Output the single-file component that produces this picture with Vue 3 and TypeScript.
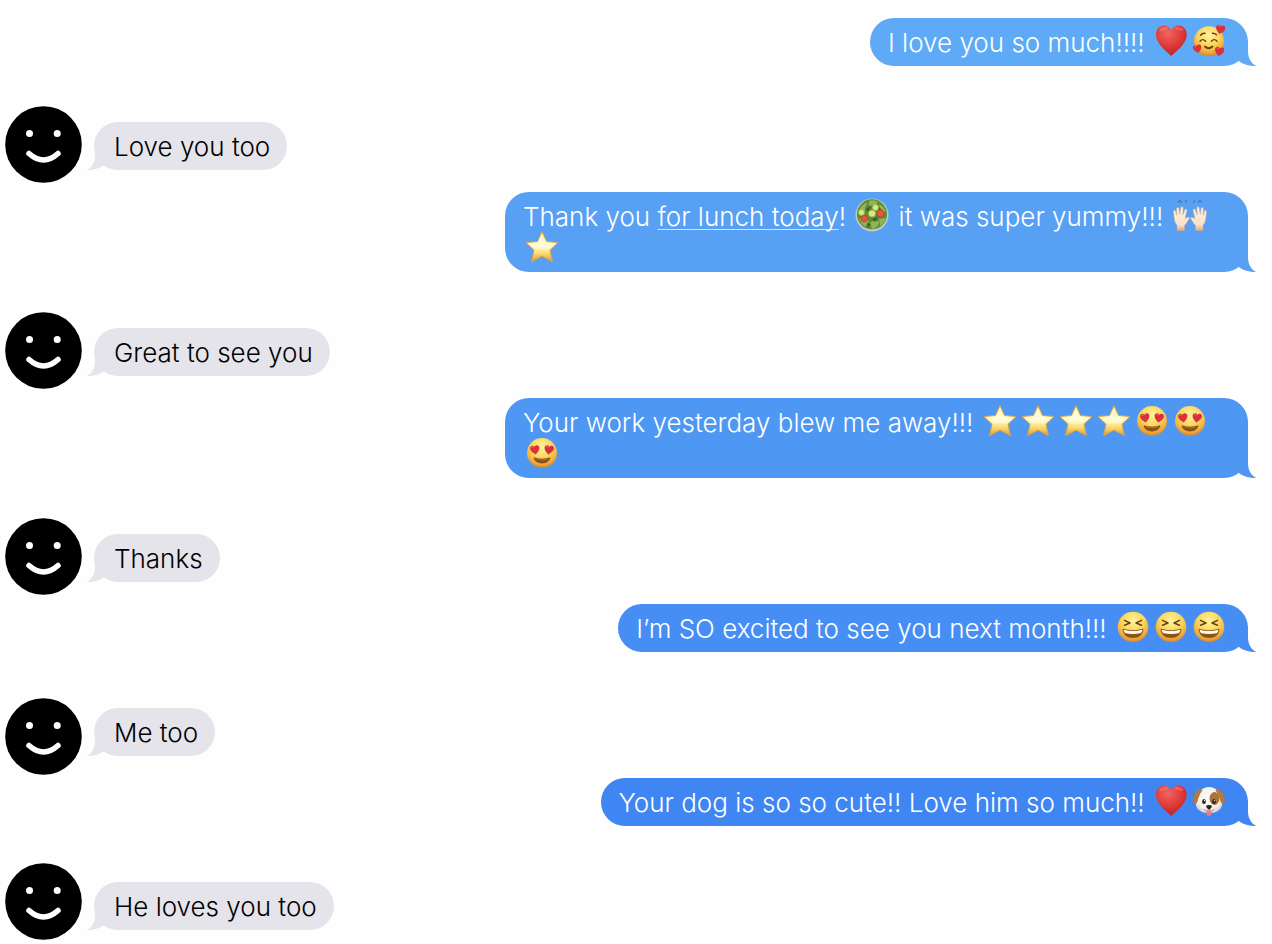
<script setup lang="ts">
interface Part {
  text?: string
  link?: string
  emoji?: string
}

interface Message {
  from: 'me' | 'friend'
  tone: string
  parts: Part[]
}

const labels: Record<string, string> = {
  heart: 'Red heart',
  adore: 'Smiling face with hearts',
  salad: 'Green salad',
  hands: 'Raising hands',
  star: 'Star',
  eyes: 'Heart eyes',
  laugh: 'Squinting laugh',
  dog: 'Dog face',
}

const emojis = (...names: string[]): Part[] => names.map((emoji) => ({ emoji }))

const messages: Message[] = [
  { from: 'me', tone: 'blue-1', parts: [{ text: 'I love you so much!!!! ' }, ...emojis('heart', 'adore')] },
  { from: 'friend', tone: 'regular', parts: [{ text: 'Love you too' }] },
  {
    from: 'me',
    tone: 'blue-2',
    parts: [
      { text: 'Thank you ' },
      { link: 'for lunch today' },
      { text: '! ' },
      ...emojis('salad'),
      { text: ' it was super yummy!!! ' },
      ...emojis('hands', 'star'),
    ],
  },
  { from: 'friend', tone: 'regular', parts: [{ text: 'Great to see you' }] },
  {
    from: 'me',
    tone: 'blue-3',
    parts: [
      { text: 'Your work yesterday blew me away!!! ' },
      ...emojis('star', 'star', 'star', 'star', 'eyes', 'eyes', 'eyes'),
    ],
  },
  { from: 'friend', tone: 'regular', parts: [{ text: 'Thanks' }] },
  {
    from: 'me',
    tone: 'blue-4',
    parts: [{ text: 'I’m SO excited to see you next month!!! ' }, ...emojis('laugh', 'laugh', 'laugh')],
  },
  { from: 'friend', tone: 'low', parts: [{ text: 'Me too' }] },
  {
    from: 'me',
    tone: 'blue-5',
    parts: [{ text: 'Your dog is so so cute!! Love him so much!! ' }, ...emojis('heart', 'dog')],
  },
  { from: 'friend', tone: 'high', parts: [{ text: 'He loves you too' }] },
]
</script>

<template>
  <main class="chat">
    <svg class="sprite" width="0" height="0" aria-hidden="true">
      <defs>
        <radialGradient id="g-heart" cx="0.4" cy="0.25" r="0.85">
          <stop offset="0" stop-color="#f0665f" />
          <stop offset="0.5" stop-color="#e03a3a" />
          <stop offset="1" stop-color="#b01d22" />
        </radialGradient>
        <radialGradient id="g-face" cx="0.5" cy="0.3" r="0.72">
          <stop offset="0" stop-color="#fff3a0" />
          <stop offset="0.5" stop-color="#fad55a" />
          <stop offset="0.8" stop-color="#efa93a" />
          <stop offset="1" stop-color="#cc7f2a" />
        </radialGradient>
        <linearGradient id="g-star" x1="0" y1="0" x2="0" y2="1">
          <stop offset="0" stop-color="#ffefa8" />
          <stop offset="0.45" stop-color="#fffbd0" />
          <stop offset="0.7" stop-color="#fbe07a" />
          <stop offset="1" stop-color="#e09c2b" />
        </linearGradient>
        <linearGradient id="g-skin" x1="0" y1="0" x2="0" y2="1">
          <stop offset="0" stop-color="#fff0e2" />
          <stop offset="0.75" stop-color="#fbe0cb" />
          <stop offset="1" stop-color="#d3a685" />
        </linearGradient>
        <radialGradient id="g-fur" cx="0.5" cy="0.4" r="0.65">
          <stop offset="0" stop-color="#ffffff" />
          <stop offset="0.7" stop-color="#f3efea" />
          <stop offset="1" stop-color="#cfc6bc" />
        </radialGradient>
      </defs>

      <symbol id="e-heart" viewBox="0 0 34 34">
        <path fill="url(#g-heart)" d="M17.300 32C14 28.600 2 20.500 2 10.500C2 5 5.700 1.500 10 1.500C13.300 1.500 16 3.400 17.300 6.200C18.600 3.400 21.300 1.500 24.700 1.500C29 1.500 32.700 5 32.700 10.500C32.700 20.500 20.600 28.600 17.300 32Z" />
        <ellipse cx="9.500" cy="5" rx="4.500" ry="1.700" fill="#ffb1a6" opacity="0.3" transform="rotate(-20 9.500 5)" />
        <ellipse cx="25" cy="4.700" rx="4.500" ry="1.600" fill="#ffb1a6" opacity="0.3" transform="rotate(15 25 4.700)" />
      </symbol>

      <symbol id="e-mini" viewBox="0 0 10 10">
        <path fill="#d9303a" d="M5 9.600C3 7.800 0.300 6 0.300 3.200C0.300 1.500 1.500 0.500 2.800 0.500C3.800 0.500 4.600 1.100 5 1.900C5.400 1.100 6.200 0.500 7.200 0.500C8.500 0.500 9.700 1.500 9.700 3.200C9.700 6 7 7.800 5 9.600Z" />
        <ellipse cx="2.900" cy="2" rx="1.300" ry="0.700" fill="#ff9a92" opacity="0.45" />
      </symbol>

      <symbol id="e-adore" viewBox="0 0 34 34">
        <circle cx="17" cy="17.200" r="15" fill="url(#g-face)" />
        <g fill="none" stroke="#6b3d10" stroke-width="1.400" stroke-linecap="round">
          <path d="M8.500 11.300Q10 9 13 9.200" />
          <path d="M20.500 9.200Q22.500 9 24.500 10.700" />
          <path d="M8 17.300Q10.800 14 13.600 17.300" />
          <path d="M19.400 17.300Q22.200 14 25 17.300" />
          <path d="M13 22.500Q16.500 26 20.500 22.500" stroke-width="1.800" />
        </g>
        <use href="#e-mini" x="23.500" y="0.500" width="10" height="10" transform="rotate(12 28 5)" />
        <use href="#e-mini" x="1" y="20" width="9" height="10" transform="rotate(-12 5 25)" />
        <use href="#e-mini" x="22.500" y="22.500" width="10" height="10" transform="rotate(10 27 27)" />
      </symbol>

      <symbol id="e-star" viewBox="0 0 34 34">
        <path fill="url(#g-star)" stroke="#dba246" stroke-width="1" stroke-linejoin="round" d="M17 1.500L21.500 11.500L33 12.500L25 20.300L27.500 31.800L17 26.200L6.500 31.800L9 20.300L1 12.500L12.500 11.500Z" />
        <path fill="#fffde4" opacity="0.5" d="M17 4.500L20.500 12.800L29.500 13.700L22 19.500H12L4.500 13.700L13.500 12.800Z" />
      </symbol>

      <symbol id="e-eyes" viewBox="0 0 34 34">
        <circle cx="17" cy="17" r="15" fill="url(#g-face)" />
        <use href="#e-mini" x="4.500" y="9" width="11" height="10" transform="rotate(-8 10 14)" />
        <use href="#e-mini" x="18.500" y="9" width="11" height="10" transform="rotate(8 24 14)" />
        <path d="M8.500 21.300Q17 24.200 25.500 21.300C24.800 25.300 21.500 27.500 17 27.500C12.500 27.500 9.200 25.300 8.500 21.300Z" fill="#87501a" />
        <path d="M10.200 22.900Q17 25.200 23.800 22.900" fill="none" stroke="#b8792c" stroke-width="0.800" />
      </symbol>

      <symbol id="e-laugh" viewBox="0 0 34 34">
        <circle cx="17" cy="17" r="15.300" fill="url(#g-face)" />
        <g fill="none" stroke="#6b4212" stroke-width="1.500" stroke-linecap="round" stroke-linejoin="round">
          <path d="M8.500 10.300L14 13L8.500 15.300" />
          <path d="M25.500 10.300L20 13L25.500 15.300" />
        </g>
        <path d="M6.500 18.800Q17 21.500 27.500 18.800C27 25 23 28 17 28C11 28 7 25 6.500 18.800Z" fill="#8a5416" />
        <path d="M7.500 19.800Q17 22.300 26.500 19.800Q26 22.600 24.600 23.300Q17 24.600 9.400 23.300Q8 22.600 7.500 19.800Z" fill="#fffbea" />
      </symbol>

      <symbol id="e-salad" viewBox="0 0 34 34">
        <circle cx="17" cy="17" r="16.500" fill="#b9cdc4" />
        <circle cx="17" cy="16.300" r="15" fill="#5f8a37" />
        <g fill="#8fb651">
          <path d="M3.500 13Q7 5 13 5Q9 9 10 13Z" />
          <path d="M14 3Q20 1 23 4.500Q19 9 14 7Z" />
          <path d="M24 6Q30 9 30.500 14L25 12Z" />
          <path d="M4 21Q10 19 14 23L10 29Q6 26 4 21Z" />
          <path d="M15 25Q20 21 24 24Q23 30 17 31Z" />
          <path d="M24 21L31 20Q29 26 25 28Z" />
        </g>
        <g fill="#35601f">
          <path d="M11 11L16 8L13 14Z" />
          <path d="M17 21L23 19L20 24Z" />
          <path d="M12 25L16 26L13 29Z" />
          <path d="M24 9L27 12L24 12Z" />
        </g>
        <g fill="#d9e87f" stroke="#93b84a" stroke-width="0.800">
          <circle cx="6.500" cy="14.500" r="3" />
          <circle cx="17" cy="15.500" r="3.500" />
          <circle cx="20.500" cy="9.500" r="3" />
        </g>
        <g fill="#e9543a" stroke="#c23a28" stroke-width="0.700">
          <circle cx="9.300" cy="20.800" r="3.300" />
          <circle cx="25.500" cy="15.500" r="3.500" />
        </g>
      </symbol>

      <symbol id="e-palm" viewBox="0 0 17 34">
        <path fill="url(#g-skin)" stroke="#d9ad8b" stroke-width="0.500" stroke-linejoin="round" d="M4 32.500L4 27C2 24.500 1.400 21.500 1 17.500L0.500 11.500C0.400 10 2.300 9.800 2.600 11.300L3.600 16L3.700 8.400C3.700 6.800 5.900 6.800 6 8.400L6.700 15L7.900 7.500C8.200 6 10.300 6.300 10.200 7.900L9.800 15.500L11.800 9.700C12.300 8.300 14.200 8.900 13.900 10.400L12.100 19.500L14.300 18.300C15.600 17.500 17 18.500 16.200 19.700C14.500 22.200 13.500 25.500 11.500 27L11.500 32.500Q7.500 34 4 32.500Z" />
      </symbol>

      <symbol id="e-hands" viewBox="0 0 34 34">
        <use href="#e-palm" width="17" height="34" transform="translate(0 3) scale(1 0.900)" />
        <use href="#e-palm" width="17" height="34" transform="translate(34 3) scale(-1 0.900)" />
        <g fill="none" stroke="#5a7488" stroke-width="1.200" stroke-linecap="round" opacity="0.850">
          <path d="M5.500 4.300L7 2.300L8.500 4.300" />
          <path d="M12 2L13.500 4.300" />
          <path d="M20.500 4.300L22 2" />
          <path d="M25.500 4.300L27 2.300L28.500 4.300" />
        </g>
      </symbol>

      <symbol id="e-dog" viewBox="0 0 34 34">
        <path fill="url(#g-fur)" d="M17 3C24 3 28 8 28.500 14C30 17 31 20 29.500 23C27 28 22 29 17 29C12 29 7 28 4.500 23C3 20 4 17 5.500 14C6 8 10 3 17 3Z" />
        <path fill="#b27a3e" d="M8.500 5C4 5.500 1 11 1.200 17C1.300 20.500 4 21 5.500 17.500C6.500 13 8 9.500 10.500 6.500Z" />
        <path fill="#b27a3e" d="M25.500 5C30 5.500 33 11 32.800 17C32.700 20.500 30 21 28.500 17.500C27.500 13 26 9.500 23.500 6.500Z" />
        <ellipse cx="22.500" cy="14.500" rx="5" ry="6.500" fill="#a8743b" />
        <ellipse cx="12" cy="17.500" rx="1.900" ry="2.500" fill="#33251d" />
        <ellipse cx="22" cy="17.500" rx="1.900" ry="2.500" fill="#33251d" />
        <circle cx="12.500" cy="16.700" r="0.600" fill="#ffffff" />
        <circle cx="22.500" cy="16.700" r="0.600" fill="#ffffff" />
        <path fill="#f0788a" d="M14.500 26.500H19.500V29.500C19.500 32.500 14.500 32.500 14.500 29.500Z" />
        <path d="M12 25.500Q14.500 28 17 25.500Q19.500 28 22 25.500" fill="none" stroke="#a39388" stroke-width="0.900" stroke-linecap="round" />
        <path fill="#2a2020" d="M14 21.800Q17 20.300 20 21.800Q19.800 24.500 17 25.800Q14.200 24.500 14 21.800Z" />
      </symbol>
    </svg>

    <div v-for="(message, i) in messages" :key="i" class="row" :class="[message.from, message.tone]">
      <svg v-if="message.from === 'friend'" class="avatar" viewBox="0 0 77 77" role="img" aria-label="Friend">
        <circle cx="38.500" cy="38.500" r="38.300" fill="#000" />
        <circle cx="24.500" cy="27.500" r="3.500" fill="#fff" />
        <circle cx="52.200" cy="27.500" r="3.500" fill="#fff" />
        <path d="M24 47.500Q38.500 60.500 53 47.500" fill="none" stroke="#fff" stroke-width="5.500" stroke-linecap="round" />
      </svg>
      <div class="bubble">
        <template v-for="(part, j) in message.parts" :key="j"><svg v-if="part.emoji" class="emoji" role="img" :aria-label="labels[part.emoji]"><use :href="'#e-' + part.emoji" /></svg><a v-else-if="part.link" class="link" href="#">{{ part.link }}</a><span v-else>{{ part.text }}</span></template>
        <svg class="tail" viewBox="0 0 34 26" aria-hidden="true">
          <path d="M26 0V12C26.300 18.500 29 23 34 26C27 26 21 24.500 17 21L12 8Z" fill="currentColor" />
        </svg>
      </div>
    </div>
  </main>
</template>

<style>
body {
  margin: 0;
  background: #fefefe;
}
</style>

<style scoped>
.chat {
  display: flex;
  flex-direction: column;
  padding: 18px 24px 4px 5px;
  font-family: Inter, "Liberation Sans", sans-serif;
  font-size: 26px;
  font-weight: 350;
  line-height: 32px;
}

.sprite {
  position: absolute;
}

.row {
  display: flex;
  align-items: flex-start;
}

.me {
  justify-content: flex-end;
}

.friend {
  gap: 12px;
  margin: 40px 0 9px;
}

.friend .bubble {
  margin-top: 16px;
  background: #e5e4ea;
  color: #e5e4ea;
  padding: 9px 17px 7px 20px;
}

.friend.low {
  margin: 46px 0 3px;
}

.friend.low .bubble {
  margin-top: 10px;
}

.friend.high {
  margin: 37px 0 0;
}

.friend.high .bubble {
  margin-top: 19px;
}

.avatar {
  width: 77px;
  height: 77px;
  flex: none;
}

.bubble {
  position: relative;
  box-sizing: border-box;
  max-width: 743px;
  padding: 9px 20px 7px 18px;
  border-radius: 24px;
}

.bubble span,
.link {
  color: #fff;
}

.friend span {
  color: #000;
}

.link {
  text-decoration-line: underline;
  text-decoration-color: #cfe3fb;
  text-decoration-thickness: 1px;
  text-decoration-skip-ink: none;
  text-underline-offset: 3px;
}

.emoji {
  width: 34px;
  height: 34px;
  margin: -6px 2px;
}

.tail {
  position: absolute;
  right: -8px;
  bottom: 0;
  width: 34px;
  height: 26px;
}

.friend .tail {
  right: auto;
  left: -7px;
  transform: scaleX(-1);
}

.blue-1 .bubble {
  background: #5eaaf6;
  color: #5eaaf6;
}

.blue-2 .bubble {
  background: #57a0f4;
  color: #57a0f4;
}

.blue-3 .bubble {
  background: #4e97f3;
  color: #4e97f3;
}

.blue-4 .bubble {
  background: #468ef3;
  color: #468ef3;
}

.blue-5 .bubble {
  background: #3f86f2;
  color: #3f86f2;
}
</style>
